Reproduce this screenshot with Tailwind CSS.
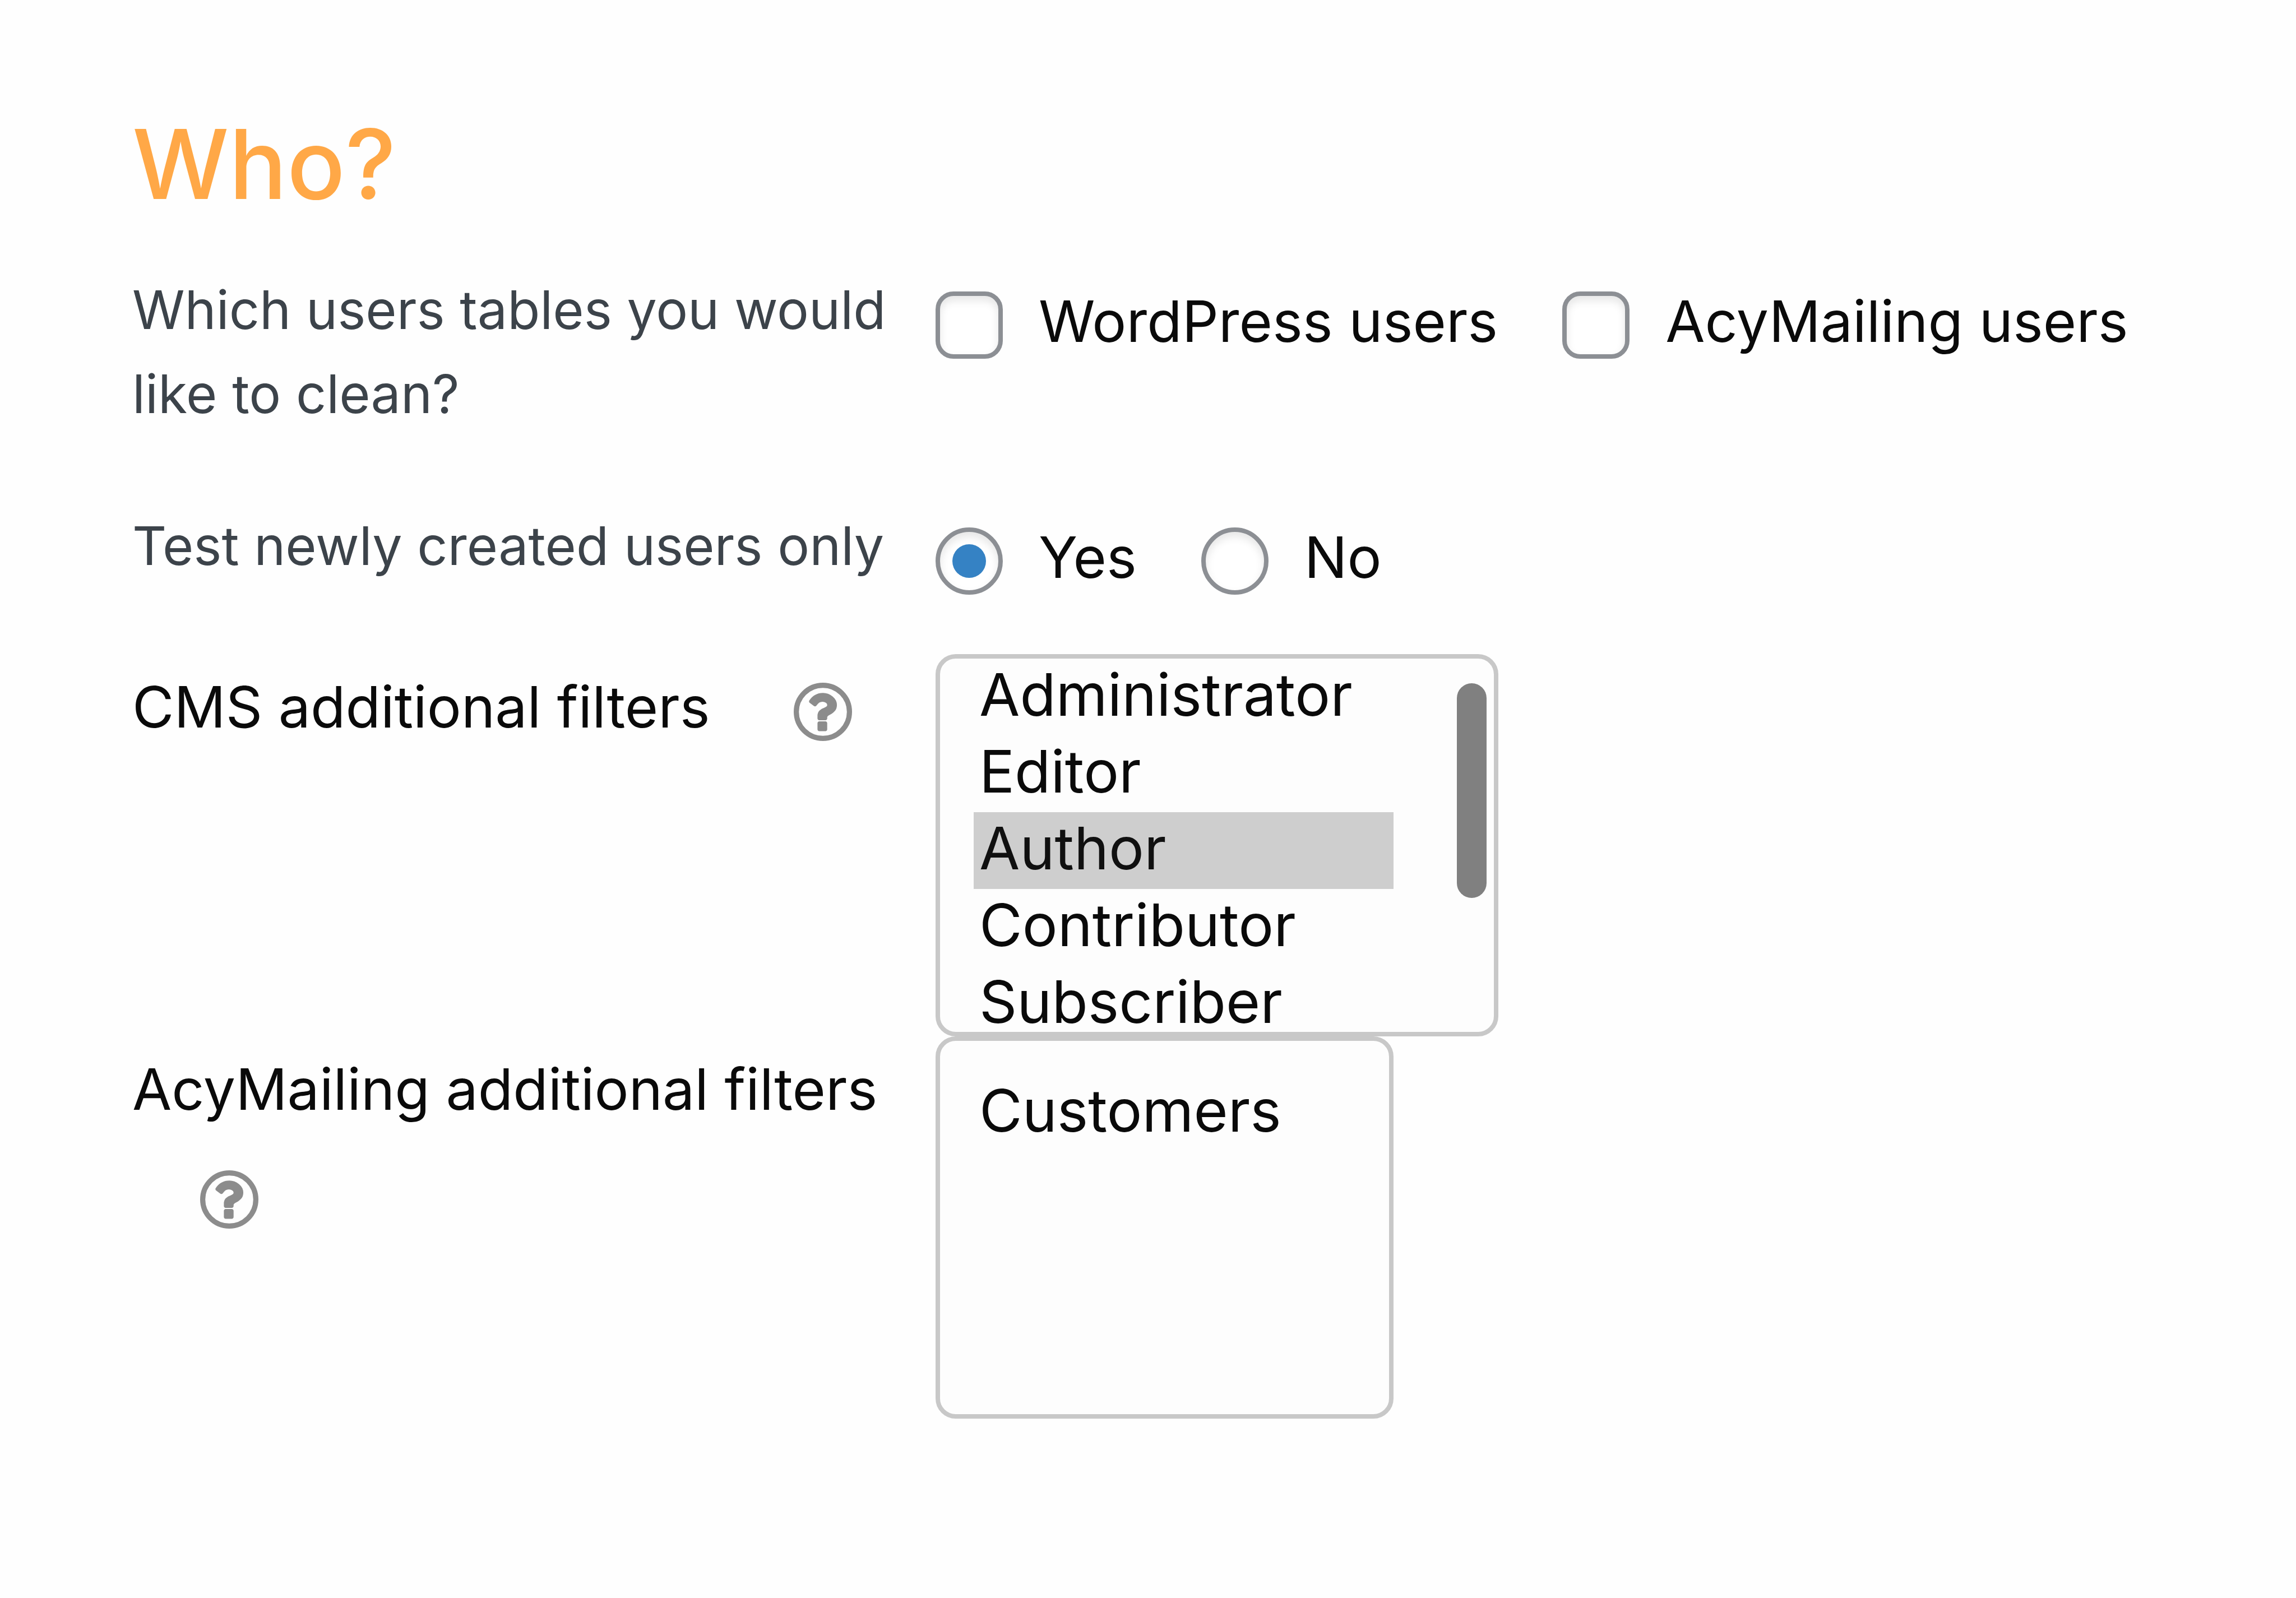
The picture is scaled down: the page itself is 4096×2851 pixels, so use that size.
<!DOCTYPE html>
<html lang="en">
<head>
<meta charset="utf-8">
<meta name="viewport" content="width=device-width, initial-scale=1">
<title>Who?</title>
<script src="https://cdn.jsdelivr.net/npm/@tailwindcss/browser@4"></script>
</head>
<body class="min-h-screen bg-[#fefefe] font-['Inter',sans-serif] text-[102px] leading-[150px] text-[#0a0a0a]">
<main class="pt-48 pr-24 pb-48 pl-[236px]">
  <h1 class="mb-[86px] text-[172px] leading-[200px] font-medium text-[#ffa847]">Who?</h1>

  <form class="grid grid-cols-[1433px_1fr] items-start">
    <p id="tables" class="pb-[121px] text-[95px] text-[#3c434a]">Which users tables you would<br>like to clean?</p>
    <div role="group" aria-labelledby="tables" class="flex gap-[115px] pt-5">
      <label class="flex items-center gap-16">
        <input type="checkbox" name="wp" class="mt-3.5 size-[120px] shrink-0 appearance-none rounded-[32px] border-8 border-[#8c8f94] bg-white shadow-[inset_0_8px_15px_rgba(0,0,0,0.1)]">
        WordPress users
      </label>
      <label class="flex items-center gap-16">
        <input type="checkbox" name="acym" class="mt-3.5 size-[120px] shrink-0 appearance-none rounded-[32px] border-8 border-[#8c8f94] bg-white shadow-[inset_0_8px_15px_rgba(0,0,0,0.1)]">
        AcyMailing users
      </label>
    </div>

    <p id="newly" class="text-[95px] text-[#3c434a]">Test newly created users only</p>
    <div role="radiogroup" aria-labelledby="newly" class="flex gap-[115px] pt-5 pb-[98px]">
      <label class="flex items-center gap-16">
        <input type="radio" name="newly" checked class="mt-3.5 grid size-[120px] shrink-0 appearance-none place-items-center rounded-full border-8 border-[#8c8f94] bg-white shadow-[inset_0_8px_15px_rgba(0,0,0,0.1)] before:size-[60px] before:rounded-full before:bg-[#3582c4] before:content-['']">
        Yes
      </label>
      <label class="flex items-center gap-16">
        <input type="radio" name="newly" class="mt-3.5 size-[120px] shrink-0 appearance-none rounded-full border-8 border-[#8c8f94] bg-white shadow-[inset_0_8px_15px_rgba(0,0,0,0.1)]">
        No
      </label>
    </div>

    <div class="leading-[188px]">
      <label for="cms">CMS additional filters</label>
      <button type="button" aria-label="Help" class="ml-[121px] inline-block size-[104px] align-middle text-[#8c8c8c]">
        <svg viewBox="0 0 1536 1536" fill="currentColor" stroke="currentColor" class="block size-full"><path transform="translate(-14 -4)" stroke-width="32" d="M880 1072v160q0 14-9 23t-23 9h-160q-14 0-23-9t-9-23v-160q0-14 9-23t23-9h160q14 0 23 9t9 23zM1136 592q0 50-15 90t-45.500 69-52 44-59.500 36q-32 18-46.500 28t-26 24-11.500 29v32q0 14-9 23t-23 9h-160q-14 0-23-9t-9-23v-68q0-35 10.500-64.500t24-47.500 39-35.500 41-25.500 44.500-21q53-25 75-43t22-49q0-42-43.500-71.500t-95.500-29.500q-56 0-95 27-29 20-80 83-9 12-25 12-11 0-19-6l-108-82q-10-7-12-20t5-23q122-192 349-192 129 0 238.500 89.500t109.500 214.500z"/><circle cx="768" cy="768" r="700" fill="none" stroke-width="136"/></svg>
      </button>
    </div>
    <div class="relative w-[1004px]">
      <select id="cms" multiple size="5" class="block h-[682px] w-full overflow-hidden rounded-[36px] border-8 border-[#c8c8c8] bg-[#fdfdfd] py-0 pr-[179px] pl-[60px] text-[105px] leading-[137px] [&>option]:h-[137px] [&>option]:px-2.5 [&>option]:py-0">
        <option>Administrator</option>
        <option>Editor</option>
        <option selected>Author</option>
        <option>Contributor</option>
        <option>Subscriber</option>
      </select>
      <span aria-hidden="true" class="pointer-events-none absolute top-[52px] right-[21px] h-[383px] w-[53px] rounded-full bg-[#808080]"></span>
    </div>

    <div class="leading-[188px]">
      <label for="acymf">AcyMailing additional filters</label>
      <button type="button" aria-label="Help" class="ml-[121px] inline-block size-[104px] align-middle text-[#8c8c8c]">
        <svg viewBox="0 0 1536 1536" fill="currentColor" stroke="currentColor" class="block size-full"><path transform="translate(-14 -4)" stroke-width="32" d="M880 1072v160q0 14-9 23t-23 9h-160q-14 0-23-9t-9-23v-160q0-14 9-23t23-9h160q14 0 23 9t9 23zM1136 592q0 50-15 90t-45.500 69-52 44-59.500 36q-32 18-46.500 28t-26 24-11.500 29v32q0 14-9 23t-23 9h-160q-14 0-23-9t-9-23v-68q0-35 10.500-64.500t24-47.500 39-35.500 41-25.500 44.500-21q53-25 75-43t22-49q0-42-43.500-71.500t-95.500-29.500q-56 0-95 27-29 20-80 83-9 12-25 12-11 0-19-6l-108-82q-10-7-12-20t5-23q122-192 349-192 129 0 238.500 89.500t109.500 214.500z"/><circle cx="768" cy="768" r="700" fill="none" stroke-width="136"/></svg>
      </button>
    </div>
    <select id="acymf" multiple size="4" class="block h-[682px] w-[817px] overflow-hidden rounded-[36px] border-8 border-[#c8c8c8] bg-[#fdfdfd] p-[60px] text-[105px] leading-[137px] [&>option]:h-[137px] [&>option]:px-2.5 [&>option]:py-0">
      <option>Customers</option>
    </select>
  </form>
</main>
</body>
</html>
